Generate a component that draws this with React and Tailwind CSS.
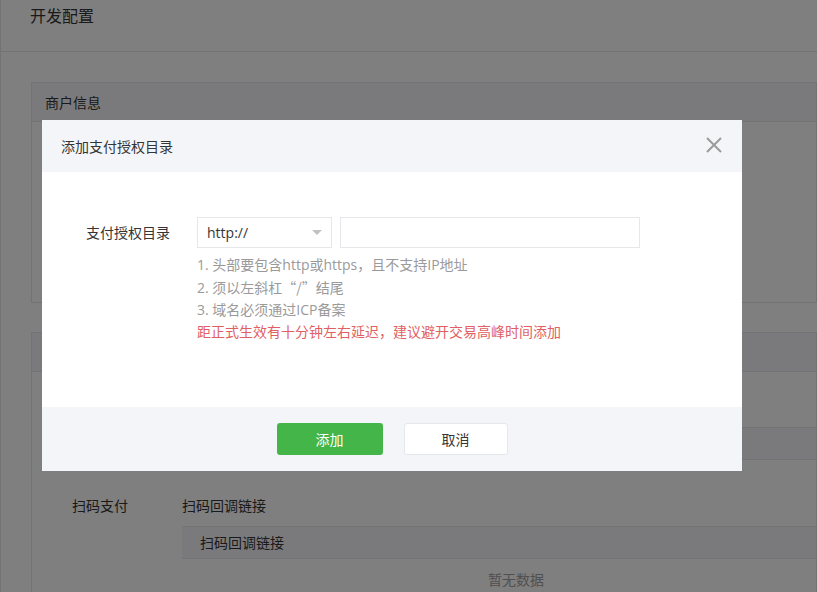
import React from "react";

const font = "font-['Open_Sans','Noto_Sans_CJK_SC',sans-serif]";
const cjk = "font-['Noto_Sans_CJK_SC',sans-serif]";

const Section = ({ label, title, header, empty }) => (
  <div className="flex px-[40px]">
    <div className="w-[110px] shrink-0 text-[14px] leading-[20px] text-[#353535]">{label}</div>
    <div className="flex-1">
      <div className="text-[14px] leading-[20px] text-[#353535]">{title}</div>
      <div className="mt-[10px] w-[668px]">
        <div className="flex h-[33px] items-center border-y border-[#e7e7eb] bg-[#f4f5f9] pl-[18px] text-[14px] text-[#353535]">
          {header}
        </div>
        {empty && (
          <div className="flex h-[40px] items-center justify-center text-[14px] text-[#a0a0a0]">
            暂无数据
          </div>
        )}
      </div>
    </div>
  </div>
);

const Panel = ({ title, children, className }) => (
  <div className={`ml-[30px] overflow-hidden border border-[#e7e7eb] bg-white ${className}`}>
    <div className="flex h-[39px] items-center border-b border-[#e7e7eb] bg-[#f4f5f9] pl-[13px] text-[14px] text-[#353535]">
      {title}
    </div>
    {children}
  </div>
);

export default function App() {
  return (
    <div className={`relative min-h-[592px] w-[817px] overflow-hidden border-l border-[#e7e7eb] bg-white ${font}`}>
      {/* page */}
      <div className="h-[52px] border-b border-[#e7e7eb] pl-[29px] pt-[4px] text-[16px] leading-[24px] text-[#353535]">
        开发配置
      </div>

      <Panel title="商户信息" className="mt-[30px]">
        <div className="h-[180px]" />
      </Panel>

      <Panel title="支付配置" className="mt-[29px] pb-[20px]">
        <div className="pt-[25px]">
          <Section label="JSAPI支付" title="支付授权目录" header="支付授权目录" />
          <div className="h-[36px]" />
          <Section label="扫码支付" title="扫码回调链接" header="扫码回调链接" empty />
        </div>
      </Panel>

      {/* mask */}
      <div className="fixed inset-0 bg-black/50" />

      {/* dialog */}
      <div className="fixed left-[42px] top-[120px] w-[700px] bg-white">
        <div className="flex h-[52px] items-center justify-between bg-[#f4f5f9] pl-[19px] pr-[20px]">
          <span className="text-[14px] text-[#353535]">添加支付授权目录</span>
          <svg width="16" height="16" viewBox="0 0 16 16" className="mt-[-2px]">
            <path d="M1 1 L15 15 M15 1 L1 15" stroke="#9b9b9b" strokeWidth="2" />
          </svg>
        </div>

        <div className="flex h-[235px] pt-[45px]">
          <div className="w-[128px] shrink-0 text-right text-[14px] leading-[31px] text-[#353535]">
            支付授权目录
          </div>
          <div className="ml-[27px]">
            <div className="flex gap-[8px]">
              <div className="flex h-[31px] w-[135px] items-center justify-between border border-[#e7e7eb] pl-[9px] pr-[9px] text-[14px] text-[#353535]">
                <span>http://</span>
                <span className="mt-[-1px] h-0 w-0 border-x-[5px] border-t-[5px] border-x-transparent border-t-[#c2c2c2]" />
              </div>
              <div className="h-[31px] w-[300px] border border-[#e7e7eb]" />
            </div>
            <div className="mt-[6px] text-[14px] leading-[22px] text-[#9a9a9a]">
              <div>1. 头部要包含http或https，且不支持IP地址</div>
              <div>
                2. 须以左斜杠<span className={cjk}>“/”</span>结尾
              </div>
              <div>3. 域名必须通过ICP备案</div>
              <div className="text-[#e15f63]">距正式生效有十分钟左右延迟，建议避开交易高峰时间添加</div>
            </div>
          </div>
        </div>

        <div className="flex h-[64px] items-center justify-center gap-[21px] bg-[#f4f5f9]">
          <button className="h-[32px] w-[106px] rounded-[3px] bg-[#44b549] text-[14px] text-white">
            添加
          </button>
          <button className="h-[32px] w-[104px] rounded-[3px] border border-[#e4e8eb] bg-white text-[14px] text-[#353535]">
            取消
          </button>
        </div>
      </div>
    </div>
  );
}
